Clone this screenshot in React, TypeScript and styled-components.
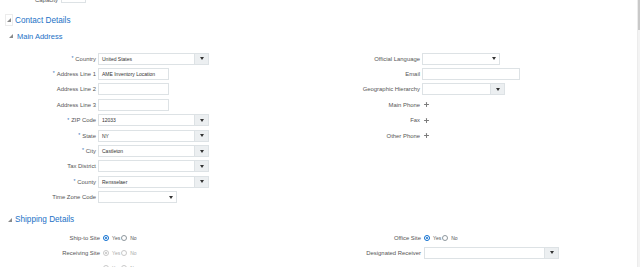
import styled, { createGlobalStyle } from 'styled-components'
import { Plus } from 'lucide-react'

const GlobalStyle = createGlobalStyle`
  html, body {
    margin: 0;
    padding: 0;
    background: #fff;
  }
  body {
    font-family: "Liberation Sans", Arial, sans-serif;
    color: #4f4f4f;
  }
`

const Page = styled.div`
  display: flex;
  width: 640px;
  height: 267px;
  overflow: hidden;
`

const Content = styled.div`
  flex: 1;
  margin-top: -9px;
`

const Scrollbar = styled.div`
  width: 2px;
  border-left: 1px solid #ececec;
  background: #f3f3f3;
  display: flex;
  flex-direction: column;
`

const Thumb = styled.div`
  height: 30px;
  background: #c9c9c9;
`

const CapacityRow = styled.div`
  display: flex;
  align-items: flex-end;
  gap: 3px;
  height: 12px;
`

const SectionHeader = styled.div<{ $top: number; $left: number }>`
  display: flex;
  align-items: center;
  gap: 2px;
  height: 12px;
  margin-top: ${p => p.$top}px;
  padding-left: ${p => p.$left}px;
  font-size: 8.2px;
  color: #2371c6;
`

const SubHeader = styled.div`
  display: flex;
  align-items: center;
  gap: 4px;
  height: 10px;
  margin-top: 5px;
  padding-left: 9px;
  font-size: 7.5px;
  color: #2371c6;
`

const ToggleBox = styled.span`
  display: flex;
  align-items: center;
  justify-content: center;
  width: 8px;
  height: 12px;
  box-sizing: border-box;
  border: 1px solid #ececec;
`

const FormGrid = styled.div<{ $cols: string; $gap: number; $row: number; $top: number }>`
  display: grid;
  grid-template-columns: ${p => p.$cols};
  grid-auto-rows: ${p => p.$row}px;
  column-gap: ${p => p.$gap}px;
  margin-top: ${p => p.$top}px;
`

const Label = styled.div`
  display: flex;
  align-items: center;
  justify-content: flex-end;
  font-size: 5.9px;
  color: #555;
  white-space: nowrap;
`

const CapacityLabel = styled(Label)`
  width: 58px;
  line-height: 7px;
  margin-bottom: -1px;
`

const Required = styled.span`
  color: #2d6db5;
  margin-right: 2px;
  font-size: 5px;
  align-self: flex-start;
  margin-top: 4px;
`

const Cell = styled.div`
  display: flex;
  align-items: center;
  gap: 3px;
`

const FieldBox = styled.div<{ $width: number }>`
  display: flex;
  align-items: center;
  flex-shrink: 0;
  width: ${p => p.$width}px;
  height: 12px;
  box-sizing: border-box;
  border: 1px solid #dde2e5;
  background: #fff;
  font-size: 5px;
  color: #333;
`

const FieldText = styled.span`
  flex: 1;
  padding-left: 3px;
  white-space: nowrap;
  overflow: hidden;
`

const DropButton = styled.span`
  display: flex;
  align-items: center;
  justify-content: center;
  width: 13px;
  align-self: stretch;
  background: #eceff1;
  border-left: 1px solid #dde2e5;
`

const InlineArrow = styled.span`
  display: flex;
  align-items: center;
  justify-content: center;
  width: 10px;
  align-self: stretch;
`

const RadioGroup = styled.div`
  display: flex;
  align-items: center;
  font-size: 5px;
`

const RadioDot = styled.span<{ $checked?: boolean; $disabled?: boolean }>`
  display: flex;
  align-items: center;
  justify-content: center;
  width: 6px;
  height: 6px;
  box-sizing: border-box;
  border-radius: 50%;
  border: 1px solid ${p => (p.$disabled ? '#c8c8c8' : p.$checked ? '#0a6ccf' : '#8e979d')};
  background: #fff;
  &::after {
    content: '';
    display: ${p => (p.$checked ? 'block' : 'none')};
    width: 2.4px;
    height: 2.4px;
    border-radius: 50%;
    background: ${p => (p.$disabled ? '#c0c0c0' : '#0a6ccf')};
  }
`

const RadioText = styled.span<{ $disabled?: boolean; $gap: number }>`
  margin-left: 3px;
  margin-right: ${p => p.$gap}px;
  color: ${p => (p.$disabled ? '#aaa' : '#555')};
`

const AddIcon = styled.span`
  display: flex;
  align-items: center;
  padding-left: 1px;
  color: #7b7b7b;
`

function Triangle({ size }: { size: number }) {
  return (
    <svg width={size} height={size} viewBox="0 0 4 4">
      <polygon points="4,0 4,4 0,4" fill="#8a8a8a" />
    </svg>
  )
}

function Arrow() {
  return (
    <svg width="4" height="3" viewBox="0 0 4 3">
      <polygon points="0,0 4,0 2,3" fill="#333" />
    </svg>
  )
}

interface FieldProps {
  width: number
  value?: string
  kind?: 'text' | 'select' | 'choice'
}

function Field({ width, value, kind = 'text' }: FieldProps) {
  return (
    <FieldBox $width={width}>
      <FieldText>{value}</FieldText>
      {kind === 'select' && (
        <DropButton>
          <Arrow />
        </DropButton>
      )}
      {kind === 'choice' && (
        <InlineArrow>
          <Arrow />
        </InlineArrow>
      )}
    </FieldBox>
  )
}

function FormLabel({ text, required }: { text: string; required?: boolean }) {
  return (
    <Label>
      {required && <Required>*</Required>}
      {text}
    </Label>
  )
}

function Radios({ yes, disabled }: { yes?: boolean; disabled?: boolean }) {
  return (
    <RadioGroup>
      <RadioDot $checked={yes} $disabled={disabled} />
      <RadioText $disabled={disabled} $gap={1}>Yes</RadioText>
      <RadioDot $checked={!yes && !disabled} $disabled={disabled} />
      <RadioText $disabled={disabled} $gap={0}>No</RadioText>
    </RadioGroup>
  )
}

function Phone({ label }: { label: string }) {
  return (
    <>
      <FormLabel text={label} />
      <Cell>
        <AddIcon>
          <Plus size={7} strokeWidth={3.5} />
        </AddIcon>
      </Cell>
    </>
  )
}

const Empty = () => (
  <>
    <div />
    <div />
  </>
)

export default function App() {
  return (
    <>
      <GlobalStyle />
      <Page>
        <Content>
          <CapacityRow>
            <CapacityLabel>Capacity</CapacityLabel>
            <Field width={25} />
          </CapacityRow>

          <SectionHeader $top={11} $left={5}>
            <ToggleBox>
              <Triangle size={4} />
            </ToggleBox>
            Contact Details
          </SectionHeader>

          <SubHeader>
            <Triangle size={4} />
            Main Address
          </SubHeader>

          <FormGrid $cols="96px 220px 100px 1fr" $gap={2} $row={15.4} $top={10}>
            <FormLabel text="Country" required />
            <Cell><Field width={111} value="United States" kind="select" /></Cell>
            <FormLabel text="Official Language" />
            <Cell><Field width={78} kind="choice" /></Cell>

            <FormLabel text="Address Line 1" required />
            <Cell><Field width={71} value="AME Inventory Location" /></Cell>
            <FormLabel text="Email" />
            <Cell><Field width={98} /></Cell>

            <FormLabel text="Address Line 2" />
            <Cell><Field width={71} /></Cell>
            <FormLabel text="Geographic Hierarchy" />
            <Cell><Field width={83} kind="select" /></Cell>

            <FormLabel text="Address Line 3" />
            <Cell><Field width={71} /></Cell>
            <Phone label="Main Phone" />

            <FormLabel text="ZIP Code" required />
            <Cell><Field width={111} value="12033" kind="select" /></Cell>
            <Phone label="Fax" />

            <FormLabel text="State" required />
            <Cell><Field width={111} value="NY" kind="select" /></Cell>
            <Phone label="Other Phone" />

            <FormLabel text="City" required />
            <Cell><Field width={111} value="Castleton" kind="select" /></Cell>
            <Empty />

            <FormLabel text="Tax District" />
            <Cell><Field width={111} kind="select" /></Cell>
            <Empty />

            <FormLabel text="County" required />
            <Cell><Field width={111} value="Rensselaer" kind="select" /></Cell>
            <Empty />

            <FormLabel text="Time Zone Code" />
            <Cell><Field width={79} kind="choice" /></Cell>
            <Empty />
          </FormGrid>

          <SectionHeader $top={9} $left={8}>
            <Triangle size={4} />
            <span style={{ marginLeft: 1 }}>Shipping Details</span>
          </SectionHeader>

          <FormGrid $cols="100px 218px 97px 1fr" $gap={3} $row={15} $top={4.5}>
            <FormLabel text="Ship-to Site" />
            <Cell><Radios yes /></Cell>
            <FormLabel text="Office Site" />
            <Cell><Radios yes /></Cell>

            <FormLabel text="Receiving Site" />
            <Cell><Radios yes disabled /></Cell>
            <FormLabel text="Designated Receiver" />
            <Cell><Field width={135} kind="select" /></Cell>

            <div />
            <Cell><Radios disabled /></Cell>
            <Empty />
          </FormGrid>
        </Content>
        <Scrollbar>
          <Thumb />
        </Scrollbar>
      </Page>
    </>
  )
}
